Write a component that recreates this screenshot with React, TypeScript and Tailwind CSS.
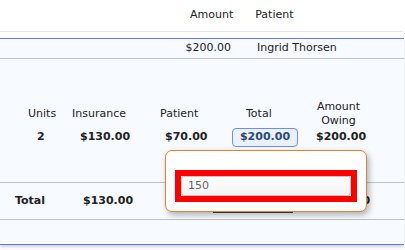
import React from "react";

export default function App() {
  return (
    <div className="relative w-[405px] h-[250px] overflow-hidden bg-white font-['DejaVu_Sans',sans-serif] text-[11px] text-[#222]">
      {/* top header */}
      <div className="flex h-[32px] w-[403px] items-center border-b border-[#e3e3ea]">
        <span className="ml-[190px]">Amount</span>
        <span className="ml-[22px]">Patient</span>
      </div>

      {/* panel */}
      <div className="mt-[6px] w-[404px] border-t border-b border-[#5b7cf0] bg-[#f7faff] shadow-[0_2px_3px_rgba(0,0,0,0.18)]">
        <div className="flex h-[20px] items-center border-b border-[#c2c2c2]">
          <span className="w-[231px] text-right">$200.00</span>
          <span className="ml-[26px]">Ingrid Thorsen</span>
        </div>

        <div className="h-[41px]" />

        {/* column headers */}
        <div className="flex h-[28px] items-center leading-[14px]">
          <div className="w-[68px] pl-[28px]">Units</div>
          <div className="w-[82px] pl-[4px]">Insurance</div>
          <div className="w-[75px] pl-[10px]">Patient</div>
          <div className="w-[80px] pl-[21px]">Total</div>
          <div className="w-[67px] text-center">
            Amount
            <br />
            Owing
          </div>
        </div>

        {/* values */}
        <div className="flex h-[19px] items-center font-bold">
          <div className="w-[68px] pl-[37px]">2</div>
          <div className="w-[82px] pl-[12px]">$130.00</div>
          <div className="w-[75px] pl-[15px]">$70.00</div>
          <div className="w-[80px] pl-[7px]">
            <div className="flex h-[19px] w-[66px] items-center justify-center rounded-[4px] border border-[#6b8ef2] bg-[#e9f1fc] text-[#2c4a70]">
              $200.00
            </div>
          </div>
          <div className="w-[67px] pl-[11px]">$200.00</div>
        </div>

        <div className="h-[35px]" />

        {/* total row */}
        <div className="flex h-[38px] items-center border-t border-b border-[#c2c2c2] font-bold">
          <div className="w-[68px] pl-[15px]">Total</div>
          <div className="w-[130px] pl-[15px]">$130.00</div>
          <div className="ml-[15px] w-[80px] self-start h-[30px] border-b border-[#444]" />
          <div className="ml-[27px]">$200.00</div>
        </div>

        <div className="h-[24px]" />
      </div>

      {/* popover */}
      <div className="absolute left-[165px] top-[150px] h-[62px] w-[202px] rounded-[7px] border border-[#e8822a] bg-white shadow-[2px_3px_6px_rgba(0,0,0,0.3)]">
        <div className="ml-[9px] mt-[19px] h-[32px] w-[182px] border-[6px] border-[#ff0000] bg-white">
          <div className="flex h-[20px] w-[170px] items-center rounded-[3px] border border-[#c6c6c6] bg-gradient-to-b from-white to-[#f3f3f3] pl-[6px] text-[11px] text-[#666] font-normal">
            150
          </div>
        </div>
      </div>
    </div>
  );
}
